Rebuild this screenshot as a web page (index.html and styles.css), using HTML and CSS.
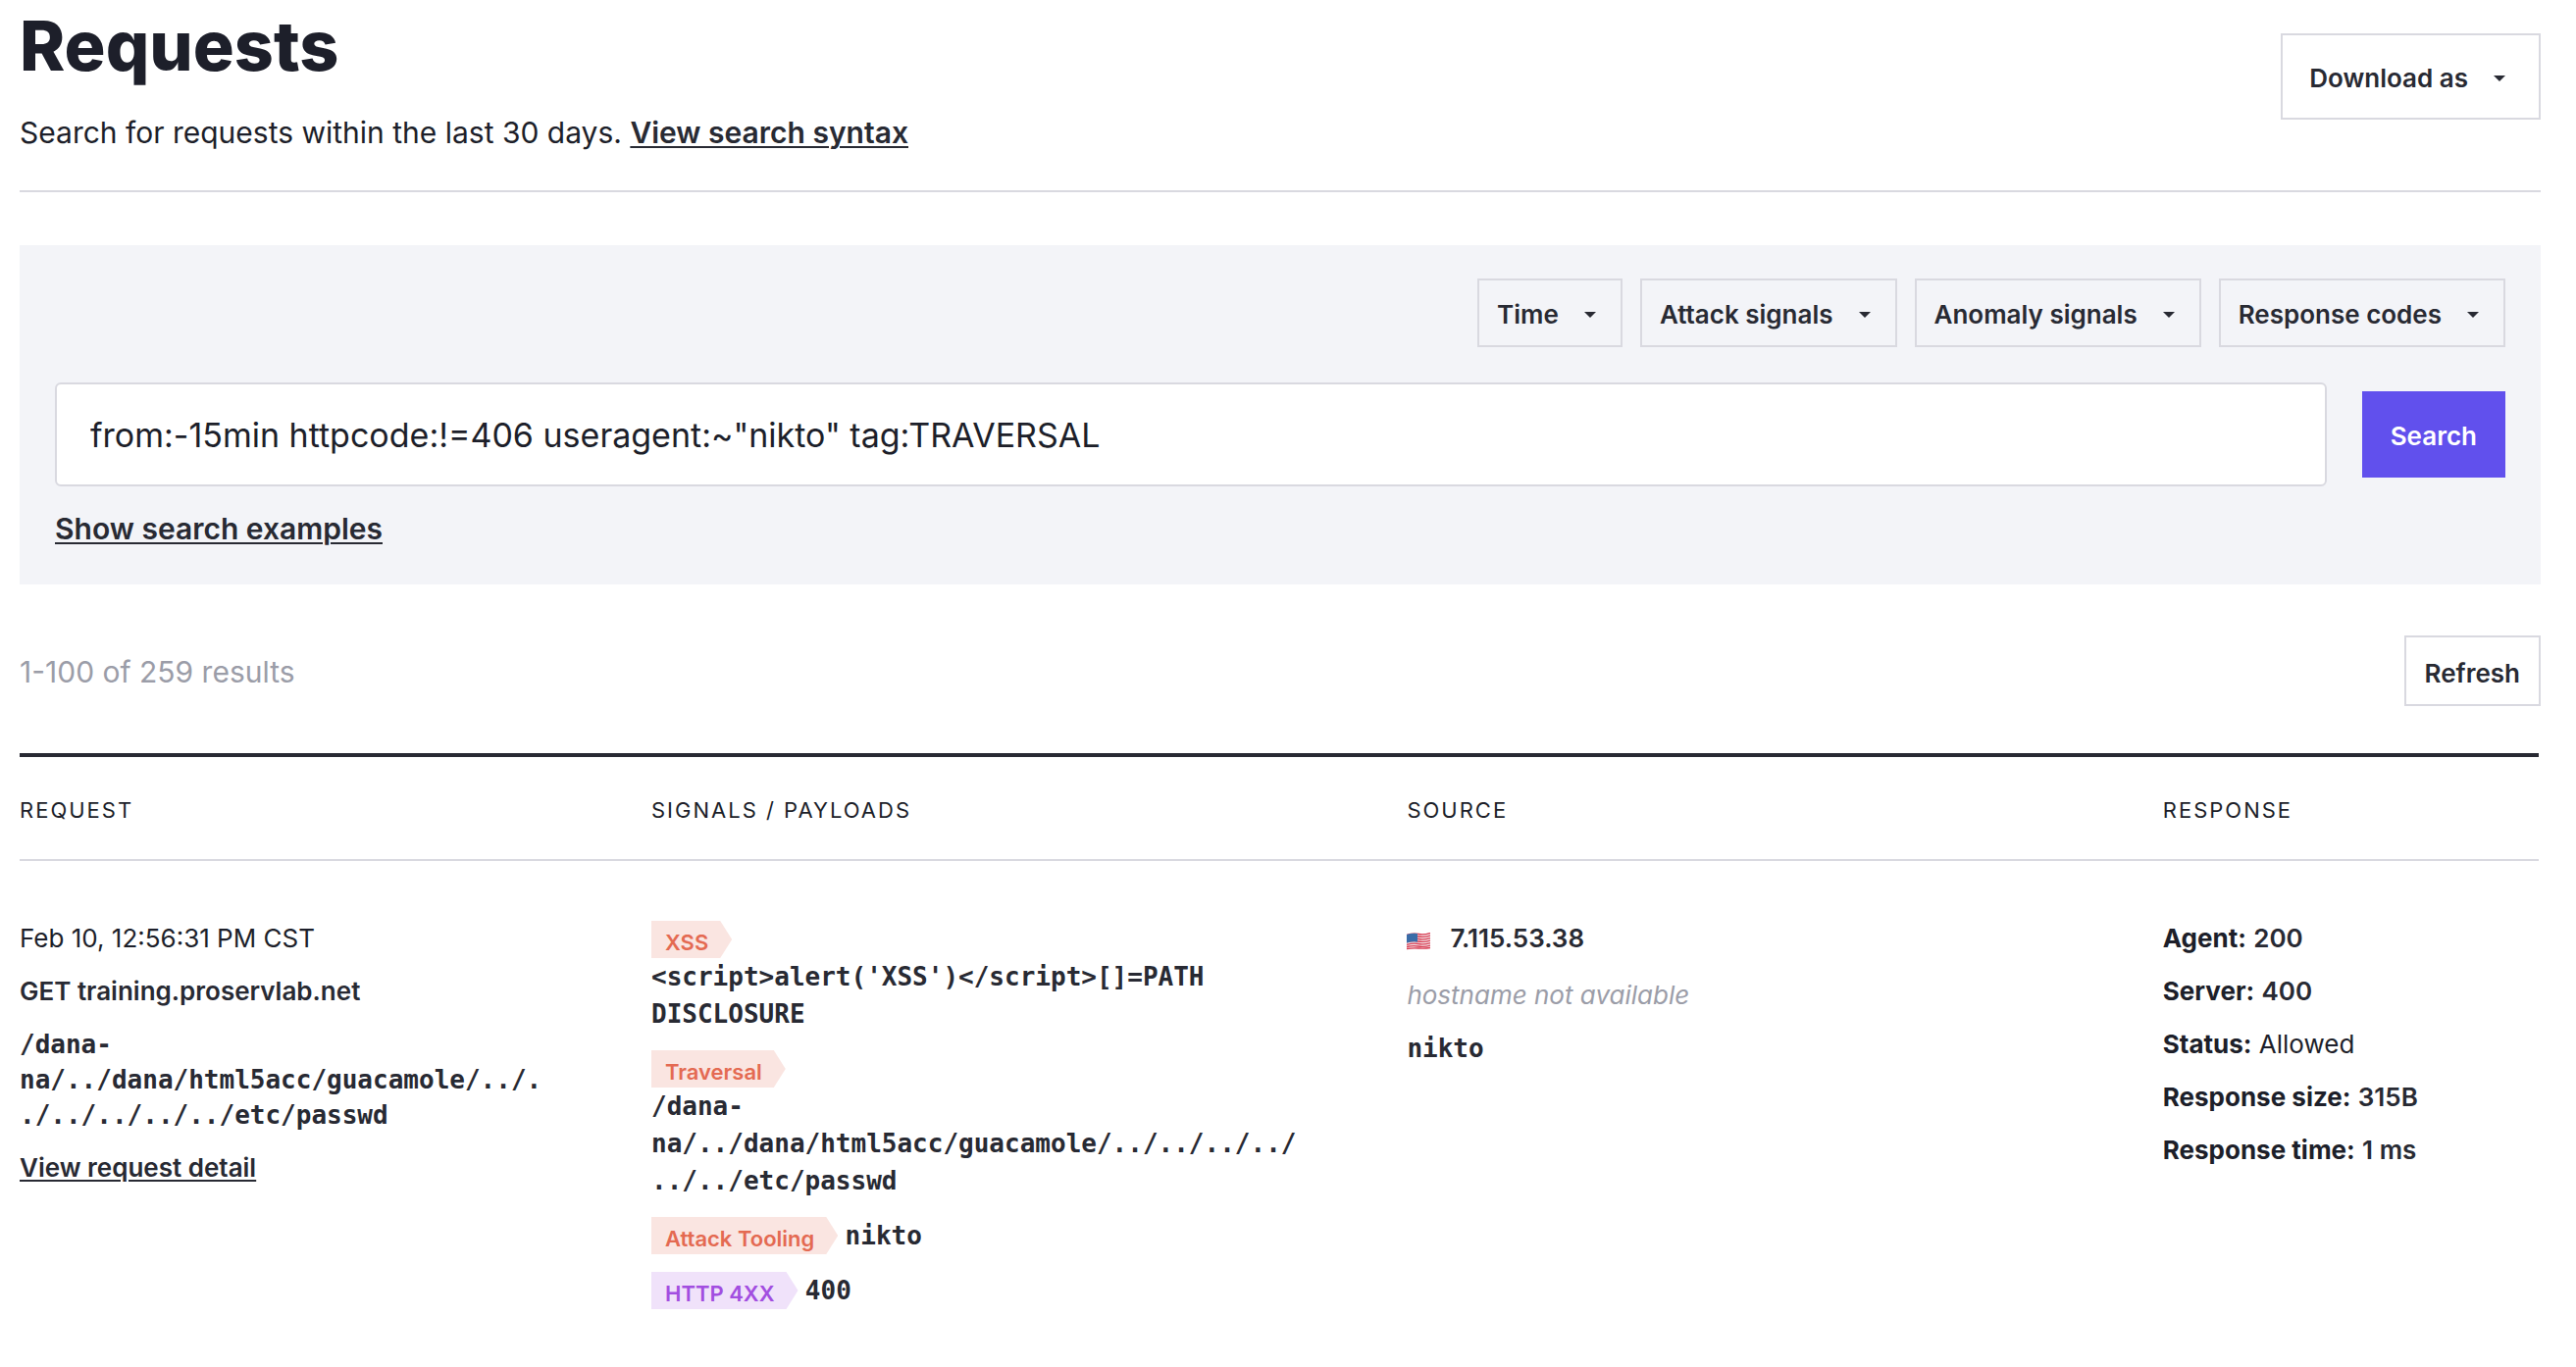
FILE: index.html
```html
<!DOCTYPE html>
<html lang="en">
<head>
<meta charset="utf-8">
<meta name="viewport" content="width=device-width, initial-scale=1">
<title>Requests</title>
<link rel="stylesheet" href="styles.css">
</head>
<body>
<main class="page">
  <header class="page-header">
    <div>
      <h1 class="page-title">Requests</h1>
      <p class="page-intro">Search for requests within the last 30 days. <a class="link" href="#syntax">View search syntax</a></p>
    </div>
    <button class="button button-large" type="button">Download as <span class="caret"></span></button>
  </header>

  <form class="search-panel" role="search">
    <div class="filters">
      <button class="button" type="button">Time <span class="caret"></span></button>
      <button class="button" type="button">Attack signals <span class="caret"></span></button>
      <button class="button" type="button">Anomaly signals <span class="caret"></span></button>
      <button class="button" type="button">Response codes <span class="caret"></span></button>
    </div>
    <div class="search-row">
      <input class="search-input" type="text" aria-label="Search query" value="from:-15min httpcode:!=406 useragent:~&quot;nikto&quot; tag:TRAVERSAL">
      <button class="button button-large button-primary" type="submit">Search</button>
    </div>
    <a class="link examples-link" href="#examples">Show search examples</a>
  </form>

  <div class="results-bar">
    <p class="results-count">1-100 of 259 results</p>
    <button class="button button-refresh" type="button">Refresh</button>
  </div>

  <table class="results">
    <colgroup>
      <col class="col-request">
      <col class="col-signals">
      <col class="col-source">
      <col class="col-response">
    </colgroup>
    <thead>
      <tr>
        <th scope="col">Request</th>
        <th scope="col">Signals / Payloads</th>
        <th scope="col">Source</th>
        <th scope="col">Response</th>
      </tr>
    </thead>
    <tbody>
      <tr>
        <td>
          <div class="stack">
            <p>Feb 10, 12:56:31 PM CST</p>
            <p class="strong">GET training.proservlab.net</p>
            <p><code class="code">/dana-na/../dana/html5acc/guacamole/../../../../../../etc/passwd</code></p>
            <p><a class="link" href="#detail">View request detail</a></p>
          </div>
        </td>
        <td>
          <ul class="signals">
            <li><span class="tag tag-attack">XSS</span> <code class="code">&lt;script&gt;alert('XSS')&lt;/script&gt;[]=PATH DISCLOSURE</code></li>
            <li><span class="tag tag-attack">Traversal</span> <code class="code">/dana-na/../dana/html5acc/guacamole/../../../../../../etc/passwd</code></li>
            <li><span class="tag tag-attack">Attack Tooling</span> <code class="code">nikto</code></li>
            <li><span class="tag tag-anomaly">HTTP 4XX</span> <code class="code">400</code></li>
          </ul>
        </td>
        <td>
          <div class="stack">
            <p class="source-ip">
              <svg class="flag" viewBox="0 0 24 18" role="img" aria-label="United States">
                <path fill="#f4eef0" d="M0 2Q6 0 12 1T24 0V16Q18 15 12 16T0 17Z"/>
                <path fill="none" stroke="#d8394f" d="M0 2.5Q6 .5 12 1.500T24 .5M0 5Q6 3 12 4T24 3M0 7.500Q6 5.500 12 6.500T24 5.500M0 10Q6 8 12 9T24 8M0 12.500Q6 10.500 12 11.500T24 10.500M0 14.500Q6 13 12 14T24 13M0 16.500Q6 15.500 12 16T24 15.500" stroke-width="1.300"/>
                <path fill="#3a6ca8" d="M0 2Q6 0 11 1V9.500Q6 8.500 0 10.500Z"/>
              </svg>
              <span class="strong">7.115.53.38</span>
            </p>
            <p class="hostname">hostname not available</p>
            <p><code class="code">nikto</code></p>
          </div>
        </td>
        <td class="cell-response">
          <div class="stack">
            <p><strong>Agent:</strong> <span class="strong">200</span></p>
            <p><strong>Server:</strong> <span class="strong">400</span></p>
            <p><strong>Status:</strong> Allowed</p>
            <p><strong>Response size:</strong> <span class="strong">315B</span></p>
            <p><strong>Response time:</strong> <span class="strong">1 ms</span></p>
          </div>
        </td>
      </tr>
    </tbody>
  </table>
</main>
</body>
</html>
```
FILE: styles.css
```css
:root {
  --text: #1d1f2a;
  --text-soft: #282a33;
  --muted: #9b9da8;
  --line: #d9d9e0;
  --panel: #f3f4f8;
  --primary: #6150ed;
}

* {
  box-sizing: border-box;
}

body {
  margin: 0;
  background: #fff;
  color: var(--text);
  font-family: Inter, "Liberation Sans", sans-serif;
  font-size: 26px;
  line-height: 36px;
}

h1, p, ul {
  margin: 0;
  padding: 0;
}

.page {
  padding: 0 36px 40px 20px;
}

.page-header {
  display: flex;
  justify-content: space-between;
  align-items: flex-start;
  padding: 4px 0 34px;
  border-bottom: 2px solid var(--line);
}

.page-title {
  font-size: 70px;
  font-weight: 800;
  line-height: 86px;
}

.page-intro {
  margin-top: 20px;
  font-size: 30px;
  line-height: 50px;
}

.link {
  color: var(--text-soft);
  font-weight: 600;
  text-decoration: underline;
  text-decoration-thickness: 2px;
  text-underline-offset: 3px;
}

.button {
  display: inline-flex;
  align-items: center;
  height: 70px;
  padding: 4px 18px 0;
  border: 2px solid var(--line);
  border-radius: 0;
  background: transparent;
  color: var(--text-soft);
  font: 600 26px/36px Inter, "Liberation Sans", sans-serif;
  white-space: nowrap;
}

.button-large {
  height: 88px;
  padding: 4px 27px 0;
}

.page-header .button {
  margin-top: 30px;
}

.button-primary {
  border-color: var(--primary);
  background: var(--primary);
  color: #fff;
}

.button-refresh {
  height: 72px;
  padding: 6px 19px 0;
}

.caret {
  margin: 0 7px 0 26px;
  border: 6px solid transparent;
  border-top-color: currentColor;
  border-bottom: 0;
}

.search-panel {
  margin-top: 54px;
  padding: 34px 36px 32px;
  background: var(--panel);
}

.filters {
  display: flex;
  justify-content: flex-end;
  gap: 18px;
}

.search-row {
  display: flex;
  align-items: center;
  gap: 36px;
  margin-top: 36px;
}

.search-input {
  flex: 1;
  min-width: 0;
  height: 106px;
  padding: 0 34px;
  border: 2px solid var(--line);
  border-radius: 6px;
  background: #fff;
  color: var(--text);
  font: 400 34px/50px Inter, "Liberation Sans", sans-serif;
}

.examples-link {
  display: inline-block;
  margin-top: 18px;
  font-size: 30px;
  line-height: 50px;
}

.results-bar {
  display: flex;
  justify-content: space-between;
  align-items: center;
  margin-top: 52px;
}

.results-count {
  padding-top: 2px;
  color: var(--muted);
  font-size: 30px;
  line-height: 50px;
}

.results {
  width: calc(100% - 2px);
  margin-top: 48px;
  border-top: 4px solid var(--text-soft);
  border-collapse: separate;
  border-spacing: 0;
  table-layout: fixed;
}

.col-request {
  width: 25%;
}

.col-signals,
.col-source {
  width: 30%;
}

.col-response {
  width: 15%;
}

.results th {
  padding: 38px 0 34px;
  border-bottom: 2px solid var(--line);
  font-size: 22px;
  font-weight: 400;
  letter-spacing: 2px;
  line-height: 32px;
  text-align: left;
  text-transform: uppercase;
}

.results td {
  padding: 61px 98px 0 0;
  vertical-align: top;
}

.results th + th,
.results td + td {
  padding-left: 2px;
}

.results .cell-response {
  padding-right: 0;
}

.stack {
  display: grid;
  gap: 18px;
}

.strong {
  color: var(--text-soft);
  font-weight: 600;
}

strong {
  font-weight: 700;
}

.code {
  display: inline-block;
  color: var(--text-soft);
  font-family: "DejaVu Sans Mono", monospace;
  font-size: 26px;
  font-weight: 700;
  overflow-wrap: anywhere;
  vertical-align: top;
}

.signals {
  display: grid;
  gap: 18px;
  line-height: 38px;
  list-style: none;
}

.tag {
  display: inline-block;
  height: 38px;
  padding: 3px 24px 0 14px;
  clip-path: polygon(0 0, calc(100% - 12px) 0, 100% 50%, calc(100% - 12px) 100%, 0 100%);
  font-size: 22px;
  font-weight: 600;
  vertical-align: top;
}

.tag-attack {
  background: #fae5e1;
  color: #e46a52;
}

.tag-anomaly {
  background: #f0e2fa;
  color: #a24ee0;
}

.source-ip {
  display: flex;
  align-items: flex-start;
  gap: 20px;
  height: 40px;
}

.flag {
  width: 24px;
  height: 18px;
  margin-top: 12px;
}

.hostname {
  color: var(--muted);
  font-style: italic;
}
```
